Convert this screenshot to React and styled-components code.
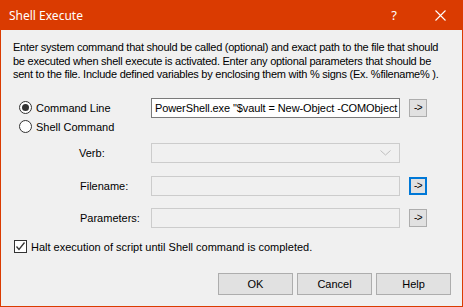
import React from "react";
import styled, { createGlobalStyle } from "styled-components";

const accent = "#da3b01";
const face = "#f0f0f0";

const GlobalStyle = createGlobalStyle`
  html, body {
    margin: 0;
    padding: 0;
    background: ${face};
  }
  * {
    box-sizing: border-box;
  }
`;

const Window = styled.div`
  display: flex;
  flex-direction: column;
  width: 463px;
  height: 307px;
  overflow: hidden;
  border: 1px solid ${accent};
  border-top: none;
  background: ${face};
  font-family: "Liberation Sans", Arial, sans-serif;
  font-size: 11px;
  color: #000;
`;

const TitleBar = styled.div`
  display: flex;
  align-items: center;
  flex-shrink: 0;
  height: 30px;
  margin: 0 -1px;
  background: ${accent};
  color: #fff;
  font-family: "Noto Sans", "Open Sans", sans-serif;
  font-size: 12px;
`;

const Title = styled.div`
  flex: 1;
  padding-left: 9px;
`;

const TitleButton = styled.div`
  display: flex;
  align-items: center;
  justify-content: center;
  width: 46px;
  height: 30px;
  font-size: 13px;
`;

const Body = styled.div`
  display: flex;
  flex-direction: column;
  flex: 1;
  padding: 11px 11px 0 12px;
`;

const Description = styled.p`
  margin: 0;
  line-height: 13.5px;
  white-space: pre;
  letter-spacing: -0.25px;
`;

const Row = styled.div`
  display: flex;
  align-items: center;
  height: ${(p) => p.$h || 20}px;
  margin-top: ${(p) => p.$mt || 0}px;
`;

const LeftCell = styled.div`
  display: flex;
  align-items: center;
  width: 138px;
  padding-left: ${(p) => p.$pad || 0}px;
`;

const Radio = styled.span`
  position: relative;
  width: 13px;
  height: 13px;
  border: 1px solid #333;
  border-radius: 50%;
  background: #fff;
  margin-right: 4px;

  &::after {
    content: "";
    display: ${(p) => (p.$checked ? "block" : "none")};
    position: absolute;
    left: 2px;
    top: 2px;
    width: 7px;
    height: 7px;
    border-radius: 50%;
    background: #333;
  }
`;

const Field = styled.div`
  display: flex;
  align-items: center;
  flex-shrink: 0;
  width: 249px;
  height: 20px;
  padding-left: 3px;
  overflow: hidden;
  white-space: nowrap;
  border: 1px solid ${(p) => (p.$disabled ? "#cccccc" : "#7a7a7a")};
  background: ${(p) => (p.$disabled ? face : "#fff")};
  font-size: 11px;
  letter-spacing: -0.1px;
`;

const ComboField = styled(Field)`
  justify-content: flex-end;
  padding-right: 8px;
`;

const ArrowButton = styled.div`
  display: flex;
  align-items: center;
  justify-content: center;
  flex-shrink: 0;
  width: 18px;
  height: 18px;
  margin-left: 9px;
  border: ${(p) => (p.$focused ? "2px solid #0078d7" : "1px solid #adadad")};
  background: #e1e1e1;
  font-size: 10px;
  letter-spacing: -0.5px;
`;

const CheckRow = styled.label`
  display: flex;
  align-items: center;
  height: 14px;
  margin-top: 12px;
  padding-left: 1px;
`;

const CheckBox = styled.span`
  display: flex;
  align-items: center;
  justify-content: center;
  width: 13px;
  height: 13px;
  border: 1px solid #333;
  background: #fff;
  margin-right: 4px;
`;

const Footer = styled.div`
  display: flex;
  justify-content: flex-end;
  gap: 4px;
  margin-top: 19px;
`;

const DialogButton = styled.div`
  display: flex;
  align-items: center;
  justify-content: center;
  width: 75px;
  height: 22px;
  border: 1px solid #adadad;
  background: #e1e1e1;
`;

const Chevron = () => (
  <svg width="11" height="6" viewBox="0 0 11 6">
    <polyline points="0.5,0.5 5.5,5 10.5,0.5" fill="none" stroke="#bfbfbf" strokeWidth="1" />
  </svg>
);

const CloseIcon = () => (
  <svg width="11" height="11" viewBox="0 0 11 11">
    <path d="M0.5 0.5 L10.5 10.5 M10.5 0.5 L0.5 10.5" stroke="#fff" strokeWidth="1.1" />
  </svg>
);

const Tick = () => (
  <svg width="11" height="11" viewBox="0 0 11 11">
    <polyline points="1.5,5.5 4,8.5 9.5,1.5" fill="none" stroke="#333" strokeWidth="1.3" />
  </svg>
);

const description =
  "Enter system command that should be called (optional) and exact path to the file that should\nbe executed when shell execute is activated. Enter any optional parameters that should be\nsent to the file. Include defined variables by enclosing them with % signs (Ex. %filename% ).";

export default function App() {
  return (
    <>
      <GlobalStyle />
      <Window>
        <TitleBar>
          <Title>Shell Execute</Title>
          <TitleButton>?</TitleButton>
          <TitleButton>
            <CloseIcon />
          </TitleButton>
        </TitleBar>
        <Body>
          <Description>{description}</Description>

          <Row $mt={16}>
            <LeftCell $pad={6}>
              <Radio $checked />
              Command Line
            </LeftCell>
            <Field>PowerShell.exe "$vault = New-Object -COMObject</Field>
            <ArrowButton>-&gt;</ArrowButton>
          </Row>
          <Row $h={18}>
            <LeftCell $pad={6}>
              <Radio />
              Shell Command
            </LeftCell>
          </Row>

          <Row $mt={7}>
            <LeftCell $pad={66}>Verb:</LeftCell>
            <ComboField $disabled>
              <Chevron />
            </ComboField>
          </Row>
          <Row $mt={13}>
            <LeftCell $pad={67}>Filename:</LeftCell>
            <Field $disabled />
            <ArrowButton $focused>-&gt;</ArrowButton>
          </Row>
          <Row $mt={12}>
            <LeftCell $pad={67}>Parameters:</LeftCell>
            <Field $disabled />
            <ArrowButton>-&gt;</ArrowButton>
          </Row>

          <CheckRow>
            <CheckBox>
              <Tick />
            </CheckBox>
            Halt execution of script until Shell command is completed.
          </CheckRow>

          <Footer>
            <DialogButton>OK</DialogButton>
            <DialogButton>Cancel</DialogButton>
            <DialogButton>Help</DialogButton>
          </Footer>
        </Body>
      </Window>
    </>
  );
}
